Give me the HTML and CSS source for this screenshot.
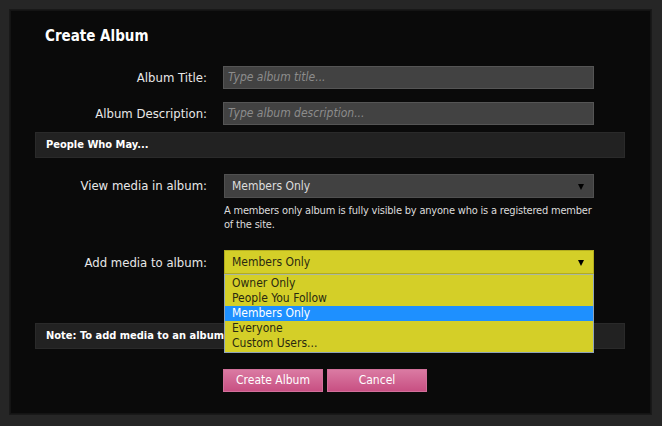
FILE: index.html
```html
<!DOCTYPE html>
<html>
<head>
<meta charset="utf-8">
<link rel="stylesheet" href="styles.css">
</head>
<body>
<div class="panel">
  <h1 class="title">Create Album</h1>
  <div class="row row-first">
    <label class="label">Album Title:</label>
    <div class="input">Type album title...</div>
  </div>
  <div class="row row-second">
    <label class="label">Album Description:</label>
    <div class="input">Type album description...</div>
  </div>
  <div class="bar">People Who May...</div>
  <div class="row row-view">
    <label class="label">View media in album:</label>
    <div class="field">
      <div class="select"><span>Members Only</span><i class="arrow"></i></div>
      <p class="help">A members only album is fully visible by anyone who is a registered member of the site.</p>
    </div>
  </div>
  <div class="row row-add">
    <label class="label">Add media to album:</label>
    <div class="field">
      <div class="select select-open"><span>Members Only</span><i class="arrow"></i></div>
      <ul class="dropdown">
        <li>Owner Only</li>
        <li>People You Follow</li>
        <li class="selected">Members Only</li>
        <li>Everyone</li>
        <li>Custom Users...</li>
      </ul>
    </div>
  </div>
  <div class="bar bar-note">Note: To add media to an album, you must first upload it.</div>
  <div class="buttons">
    <button class="btn">Create Album</button>
    <button class="btn">Cancel</button>
  </div>
</div>
</body>
</html>
```
FILE: styles.css
```css
html, body {
  margin: 0;
  padding: 0;
  background: #262626;
}
body {
  padding: 9px 10px 10px 9px;
  font-family: "DejaVu Sans Condensed", "DejaVu Sans", sans-serif;
  color: #e6e6e6;
}
.panel {
  width: 641px;
  height: 404px;
  background: #0a0a0a;
  border: 1px solid #191919;
  box-shadow: inset 0 0 0 1px #141414;
  position: relative;
  overflow: hidden;
}
.title {
  margin: 0;
  padding: 17px 0 0 35px;
  font-size: 15px;
  font-weight: bold;
  color: #ffffff;
  line-height: 18px;
  height: 39px;
}
.row {
  display: flex;
  align-items: flex-start;
}
.label {
  width: 197px;
  text-align: right;
  font-size: 13px;
  line-height: 23px;
  color: #e8e8e8;
  flex: none;
}
.row-first { margin-top: 0; }
.row-second { margin-top: 13px; }
.input {
  margin-left: 16px;
  width: 365px;
  height: 21px;
  background: #424242;
  border: 1px solid #555555;
  padding-left: 4px;
  font-size: 12px;
  line-height: 21px;
  font-style: italic;
  color: #8c8c8c;
  box-sizing: content-box;
}
.bar {
  margin: 7px 0 0 25px;
  width: 578px;
  height: 24px;
  background: #222222;
  border: 1px solid #2a2a2a;
  padding-left: 10px;
  font-size: 11px;
  font-weight: bold;
  line-height: 24px;
  color: #ffffff;
  white-space: nowrap;
  overflow: hidden;
}
.row-view { margin-top: 16px; }
.row-view .label { line-height: 24px; }
.row-add { margin-top: 18px; position: relative; }
.row-add .label { line-height: 26px; }
.field {
  margin-left: 17px;
  width: 370px;
  position: relative;
}
.select {
  height: 22px;
  background: #414141;
  border: 1px solid #505050;
  padding-left: 7px;
  font-size: 12px;
  line-height: 23px;
  color: #dddddd;
  position: relative;
}
.arrow {
  position: absolute;
  right: 9px;
  top: 9px;
  width: 0;
  height: 0;
  border-left: 3.5px solid transparent;
  border-right: 3.5px solid transparent;
  border-top: 6px solid #000;
}
.select-open {
  background: #d4cf28;
  border-color: #b3ad1e;
  color: #2a2a10;
}
.help {
  margin: 6px 0 0 0;
  font-size: 11px;
  line-height: 14px;
  letter-spacing: -0.2px;
  color: #dcdcdc;
}
.dropdown {
  position: absolute;
  left: 0;
  top: 24px;
  width: 368px;
  margin: 0;
  padding: 1px 0 1px 0;
  list-style: none;
  background: #d4cf28;
  border: 1px solid #8ea3ba;
  border-top-color: #aab7a0;
  font-size: 12px;
  line-height: 15px;
  color: #2a2a10;
  z-index: 2;
}
.dropdown li {
  padding-left: 7px;
  height: 15px;
}
.dropdown li.selected {
  background: #1e90ff;
  color: #ffffff;
}
.bar-note { margin-top: 47px; }
.buttons {
  display: flex;
  gap: 4px;
  margin: 20px 0 0 213px;
}
.btn {
  width: 100px;
  height: 23px;
  border: 1px solid #d2709a;
  background: linear-gradient(#da7aa2, #c85083);
  color: #ffffff;
  font-family: "DejaVu Sans Condensed", "DejaVu Sans", sans-serif;
  font-size: 12px;
  padding: 0;
  line-height: 21px;
}
```
